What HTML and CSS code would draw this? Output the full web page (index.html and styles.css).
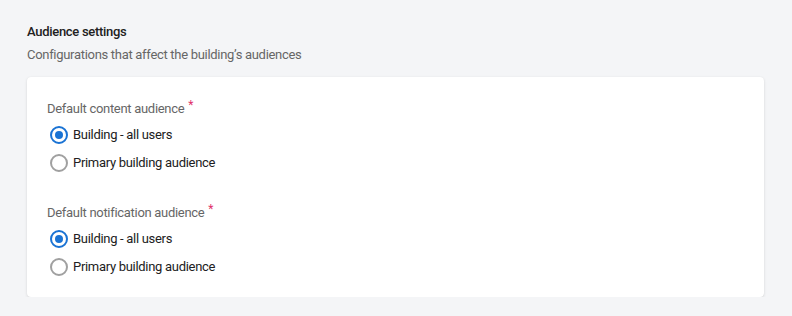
FILE: index.html
```html
<!DOCTYPE html>
<html lang="en">
<head>
    <meta charset="UTF-8">
    <meta name="viewport" content="width=device-width, initial-scale=1.0">
    <title>Audience settings</title>
    <link rel="stylesheet" href="styles.css">
</head>
<body>
    <div class="section">
        <h2>Audience settings</h2>
        <p class="subtitle">Configurations that affect the building’s audiences</p>

        <div class="card">
            <div class="group">
                <div class="label">Default content audience <span class="req">*</span></div>
                <label class="option">
                    <input type="radio" name="content" checked>
                    <span>Building - all users</span>
                </label>
                <label class="option">
                    <input type="radio" name="content">
                    <span>Primary building audience</span>
                </label>
            </div>
            <div class="group">
                <div class="label">Default notification audience <span class="req">*</span></div>
                <label class="option">
                    <input type="radio" name="notify" checked>
                    <span>Building - all users</span>
                </label>
                <label class="option">
                    <input type="radio" name="notify">
                    <span>Primary building audience</span>
                </label>
            </div>
        </div>
    </div>
</body>
</html>
```

FILE: styles.css
```css
:root {
    --bg-color: #f4f5f7;
    --card-bg: #ffffff;
    --text-primary: #212121;
    --text-secondary: #666666;
    --accent: #1a73d4;
    --radio-off: #a0a0a0;
    --required: #e0306a;
}

body {
    font-family: Roboto, 'Liberation Sans', sans-serif;
    background-color: var(--bg-color);
    color: var(--text-primary);
    margin: 0;
    font-size: 13px;
    line-height: 16px;
    letter-spacing: -0.3px;
}

.section {
    padding: 24px 28px 0 27px;
}

h2 {
    margin: 0;
    font-size: 13px;
    font-weight: 500;
    line-height: 16px;
    color: var(--text-primary);
}

.subtitle {
    margin: 7px 0 14px;
    color: var(--text-secondary);
}

.card {
    background: var(--card-bg);
    border-radius: 4px;
    box-shadow: 0 1px 3px rgba(0, 0, 0, 0.12), 0 0 1px rgba(0, 0, 0, 0.06);
    padding: 24px 20px 16px;
    display: flex;
    flex-direction: column;
    gap: 28px;
}

.label {
    color: var(--text-secondary);
    margin-bottom: 4px;
}

.req {
    color: var(--required);
    position: relative;
    top: -4px;
    margin-left: 1px;
    font-size: 12px;
}

.option {
    display: flex;
    align-items: center;
    height: 28px;
    cursor: pointer;
}

.option input {
    appearance: none;
    margin: 0 5px 0 3px;
    width: 18px;
    height: 18px;
    border: 2px solid var(--radio-off);
    border-radius: 50%;
    box-sizing: border-box;
    display: flex;
    align-items: center;
    justify-content: center;
    cursor: pointer;
}

.option input:checked {
    border-color: var(--accent);
}

.option input:checked::after {
    content: "";
    width: 8px;
    height: 8px;
    border-radius: 50%;
    background: var(--accent);
}
```
